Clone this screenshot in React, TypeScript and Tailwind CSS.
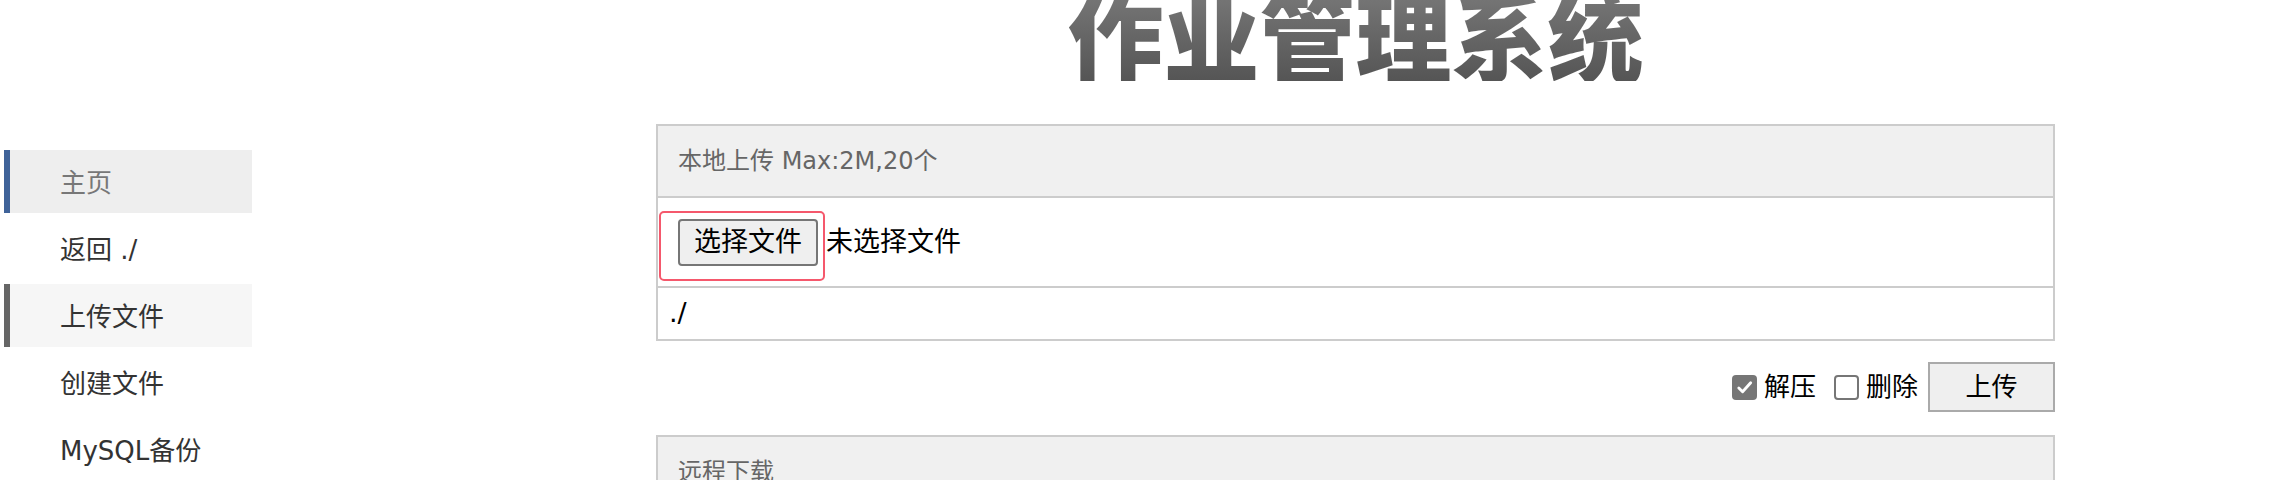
import type { CSSProperties } from "react";

const font: CSSProperties = {
  fontFamily: '"DejaVu Sans", "Noto Sans CJK SC", sans-serif',
};

const navItems = [
  { label: "主页", cls: "bg-[#eeeeee] border-[#3f6399] text-[#777777]" },
  { label: "返回 ./", cls: "border-transparent text-[#333333]" },
  { label: "上传文件", cls: "bg-[#f6f6f6] border-[#666666] text-[#333333]" },
  { label: "创建文件", cls: "border-transparent text-[#333333]" },
  { label: "MySQL备份", cls: "border-transparent text-[#333333]" },
];

const SideNav = () => (
  <div className="w-[248px] ml-[4px] pt-[150px] shrink-0">
    {navItems.map((item) => (
      <div
        key={item.label}
        className={`flex items-center h-[63px] mb-[4px] border-l-[6px] pl-[50px] pt-[3px] text-[26px] ${item.cls}`}
      >
        {item.label}
      </div>
    ))}
  </div>
);

const Check = ({ on }: { on: boolean }) =>
  on ? (
    <span className="w-[25px] h-[25px] rounded-[4px] bg-[#767676] flex items-center justify-center">
      <svg width="19" height="19" viewBox="0 0 20 20" fill="none">
        <path d="M4 10.5l4 4L16.5 5" stroke="#fff" strokeWidth="3" strokeLinecap="round" strokeLinejoin="round" />
      </svg>
    </span>
  ) : (
    <span className="w-[25px] h-[25px] rounded-[4px] border-2 border-[#767676] bg-white" />
  );

export default function App() {
  return (
    <div className="flex bg-white h-[480px] overflow-hidden" style={font}>
      <SideNav />
      <div className="ml-[404px] w-[1399px] shrink-0">
        <h1
          className="mt-[-15px] h-[96px] text-center text-[96px] leading-none font-black bg-linear-to-b from-[#7a7a7a] to-[#555555] bg-clip-text text-transparent"
          style={{ fontFamily: '"Noto Sans CJK SC", sans-serif' }}
        >
          作业管理系统
        </h1>

        <div className="mt-[43px] border-2 border-[#cccccc]">
          <div className="h-[72px] bg-[#f0f0f0] flex items-center pl-[20px] text-[24px] text-[#666666] border-b-2 border-[#cccccc]">
            本地上传 Max:2M,20个
          </div>
          <div className="h-[90px] border-b-2 border-[#cccccc] pt-[13px] flex items-start">
            <span className="ml-[1px] border-2 border-[#f5586c] rounded-[5px] pl-[17px] pr-[5px] pt-[6px] pb-[13px] flex">
              <span className="h-[47px] px-[14px] flex items-center rounded-[4px] border-2 border-[#767676] bg-[#efefef] text-[27px] text-black">
                选择文件
              </span>
            </span>
            <span className="h-[58px] ml-[1px] mt-[2px] flex items-center text-[27px] text-black">未选择文件</span>
          </div>
          <div className="h-[51px] flex items-center pl-[11px] text-[27px] text-black">./</div>
        </div>

        <div className="mt-[21px] flex items-center justify-end text-[26px] text-black">
          <Check on />
          <span className="ml-[7px]">解压</span>
          <span className="ml-[18px] flex">
            <Check on={false} />
          </span>
          <span className="ml-[7px]">删除</span>
          <button className="ml-[10px] w-[127px] h-[50px] border-2 border-[#aaaaaa] bg-[#efefef] text-[26px] text-black">
            上传
          </button>
        </div>

        <div className="mt-[23px] border-2 border-[#cccccc]">
          <div className="h-[72px] bg-[#f0f0f0] flex items-center pl-[20px] text-[24px] text-[#666666] border-b-2 border-[#cccccc]">
            远程下载
          </div>
        </div>
      </div>
    </div>
  );
}
